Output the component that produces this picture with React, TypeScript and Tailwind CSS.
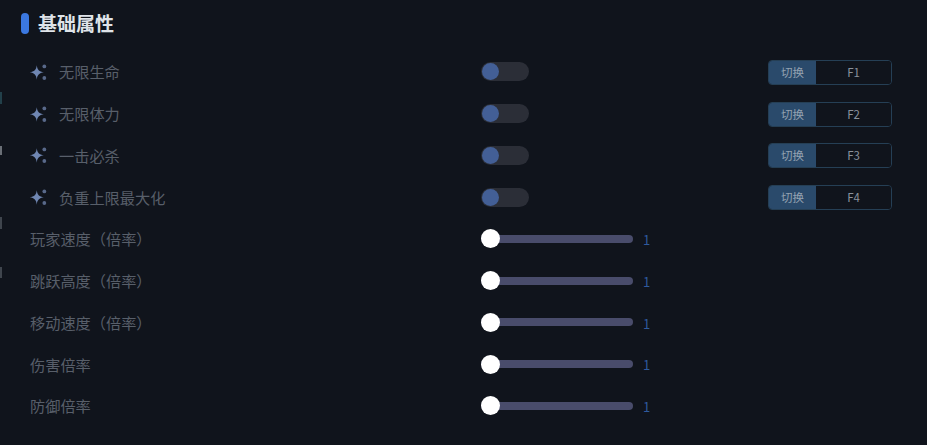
import React from "react";

const font = { fontFamily: '"Noto Sans CJK SC", sans-serif' };

function Sparkle() {
  return (
    <svg width="20" height="20" viewBox="0 0 18 18" className="ml-[-1px] mr-[-1px] shrink-0">
      <path d="M7 3 C7.5 7 9 8.7 13.4 9.3 C9 10 7.5 11.6 7 16 C6.5 11.6 5 10 .6 9.3 C5 8.7 6.5 7 7 3Z" fill="#6f86b2" />
      <circle cx="13.8" cy="4" r="1.7" fill="#59698a" />
      <circle cx="13.8" cy="14.4" r="1.7" fill="#59698a" />
    </svg>
  );
}

function ToggleRow({ label, k }: { label: string; k: string }) {
  return (
    <div className="flex h-[41.75px] items-center">
      <div className="flex w-[451px] items-center gap-[11px]">
        <Sparkle />
        <span className="text-[15.2px] text-[#585f6a]">{label}</span>
      </div>
      <div className="relative h-[19px] w-[48px] rounded-full bg-[#2b2e37]">
        <div className="absolute left-[1px] top-[1px] h-[17px] w-[17px] rounded-full bg-[#435f96]" />
      </div>
      <div className="ml-[239px] mt-[1px] flex h-[25px] w-[124px] overflow-hidden rounded-[4px] border border-[#253f55] text-[11.5px]">
        <div className="flex w-[47px] items-center justify-center bg-[#2a4a6b] text-[#94a2b1]">切换</div>
        <div className="flex flex-1 items-center justify-center bg-[#10141c] text-[#8a929c]">{k}</div>
      </div>
    </div>
  );
}

function SliderRow({ label }: { label: string }) {
  return (
    <div className="flex h-[41.75px] items-center">
      <div className="w-[451px] text-[15.2px] text-[#585f6a]">{label}</div>
      <div className="relative h-[8px] w-[152px] rounded-full bg-[#494c6b]">
        <div className="absolute left-0 top-[-5.5px] h-[19px] w-[19px] rounded-full bg-white" />
      </div>
      <span className="ml-[10px] pt-[2px] text-[13px] text-[#2f5a9e]">1</span>
    </div>
  );
}

export default function App() {
  return (
    <div style={font} className="relative h-[445px] w-[927px] overflow-hidden bg-[#10141c]">
      <div className="absolute left-0 top-[92px] h-[12px] w-[2px] bg-[#22404a]" />
      <div className="absolute left-0 top-[146px] h-[9px] w-[2px] bg-[#6a6f76]" />
      <div className="absolute left-0 top-[217px] h-[12px] w-[2px] bg-[#3f454d]" />
      <div className="absolute left-0 top-[267px] h-[11px] w-[2px] bg-[#3f454d]" />
      <div className="flex items-center gap-[9px] pl-[21px] pt-[11px]">
        <div className="h-[21px] w-[8px] rounded-full bg-[#3b78e0]" />
        <h2 className="text-[19px] leading-[24px] font-bold text-[#dfe3e8]">基础属性</h2>
      </div>
      <div className="pl-[30px] pt-[16px]">
        <ToggleRow label="无限生命" k="F1" />
        <ToggleRow label="无限体力" k="F2" />
        <ToggleRow label="一击必杀" k="F3" />
        <ToggleRow label="负重上限最大化" k="F4" />
        <SliderRow label="玩家速度（倍率）" />
        <SliderRow label="跳跃高度（倍率）" />
        <SliderRow label="移动速度（倍率）" />
        <SliderRow label="伤害倍率" />
        <SliderRow label="防御倍率" />
      </div>
    </div>
  );
}
